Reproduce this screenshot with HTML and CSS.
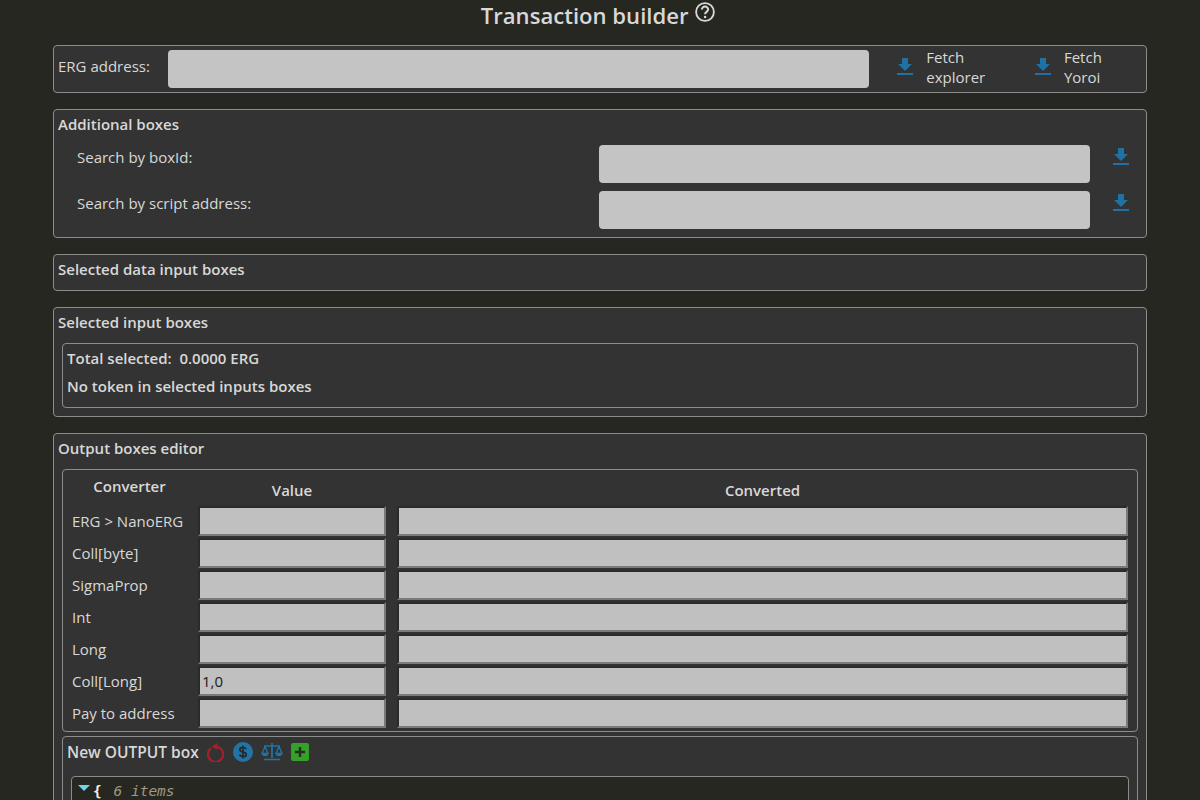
FILE: index.html
```html
<!DOCTYPE html>
<html lang="en">
<head>
  <meta charset="UTF-8">
  <title>Transaction builder</title>
  <link rel="stylesheet" href="styles.css">
</head>
<body>

  <h2 class="page-title">Transaction builder
    <svg class="help-icon" viewBox="0 0 24 24" width="22" height="22"><circle cx="12" cy="12" r="9.7" fill="none" stroke="currentColor" stroke-width="2"/><path d="M8.6 9.4a3.4 3.4 0 0 1 6.8 0c0 2.4-3.3 2.600-3.300 5" fill="none" stroke="currentColor" stroke-width="2.200"/><circle cx="12.100" cy="17.400" r="1.400" fill="currentColor"/></svg>
  </h2>

  <div class="card address-card">
    <label class="address-label">ERG address:</label>
    <input type="text" class="big-input address-input">
    <span class="fetch fetch-explorer">
      <svg class="dl-icon" viewBox="0 0 16 17" width="16" height="17"><use href="#dl"/></svg>
      <span class="fetch-text">Fetch explorer</span>
    </span>
    <span class="fetch">
      <svg class="dl-icon" viewBox="0 0 16 17" width="16" height="17"><use href="#dl"/></svg>
      <span class="fetch-text">Fetch Yoroi</span>
    </span>
  </div>

  <div class="card">
    <div class="card-title">Additional boxes</div>
    <div class="search-row">
      <label class="search-label">Search by boxId:</label>
      <input type="text" class="big-input search-input">
      <svg class="dl-icon" viewBox="0 0 16 17" width="16" height="17"><use href="#dl"/></svg>
    </div>
    <div class="search-row">
      <label class="search-label">Search by script address:</label>
      <input type="text" class="big-input search-input">
      <svg class="dl-icon" viewBox="0 0 16 17" width="16" height="17"><use href="#dl"/></svg>
    </div>
  </div>

  <div class="card">
    <div class="card-title">Selected data input boxes</div>
  </div>

  <div class="card">
    <div class="card-title">Selected input boxes</div>
    <div class="inner summary">
      <div class="summary-line">Total selected:&nbsp; 0.0000 ERG</div>
      <div class="summary-line">No token in selected inputs boxes</div>
    </div>
  </div>

  <div class="card output-card">
    <div class="card-title">Output boxes editor</div>
    <div class="inner converter">
      <div class="conv-head conv-first">Converter</div>
      <div class="conv-head">Value</div>
      <div class="conv-head">Converted</div>

      <label class="conv-label">ERG &gt; NanoERG</label>
      <input type="text" class="conv-input"><input type="text" class="conv-input">
      <label class="conv-label">Coll[byte]</label>
      <input type="text" class="conv-input"><input type="text" class="conv-input">
      <label class="conv-label">SigmaProp</label>
      <input type="text" class="conv-input"><input type="text" class="conv-input">
      <label class="conv-label">Int</label>
      <input type="text" class="conv-input"><input type="text" class="conv-input">
      <label class="conv-label">Long</label>
      <input type="text" class="conv-input"><input type="text" class="conv-input">
      <label class="conv-label">Coll[Long]</label>
      <input type="text" class="conv-input" value="1,0"><input type="text" class="conv-input">
      <label class="conv-label">Pay to address</label>
      <input type="text" class="conv-input"><input type="text" class="conv-input">
    </div>

    <div class="inner new-output">
      <div class="new-output-head">
        <span class="new-output-title">New OUTPUT box</span>
        <svg class="tool-icon reset-icon" viewBox="0 0 18 20" width="18" height="20"><path d="M5 6.200a7.600 7.600 0 1 0 6.500-1.300" fill="none" stroke="#a3212a" stroke-width="2.200"/><path d="M11.500 0.800v7.400L6 4.500z" fill="#a3212a"/></svg>
        <svg class="tool-icon" viewBox="0 0 20 20" width="20" height="20"><circle cx="10" cy="10" r="10" fill="#2274a8"/><path d="M13.200 7.200c-.4-1.200-1.600-1.900-3.200-1.900-1.900 0-3.200 1-3.200 2.400 0 3.200 6.500 1.500 6.500 4.700 0 1.400-1.400 2.300-3.300 2.300-1.700 0-3-.8-3.400-2.100M10 3.400v13.200" fill="none" stroke="#2a2a2a" stroke-width="1.800"/></svg>
        <svg class="tool-icon" viewBox="0 0 22 20" width="22" height="20"><path d="M11 1v15M3 4h16M3 17.500h16" fill="none" stroke="#2274a8" stroke-width="1.700"/><path d="M4 4.500 1 11.500h6zM18 4.500l-3 7h6z" fill="none" stroke="#2274a8" stroke-width="1.300"/><path d="M1 11.500a3 2.600 0 0 0 6 0zM15 11.500a3 2.600 0 0 0 6 0z" fill="#2274a8"/></svg>
        <svg class="tool-icon" viewBox="0 0 18 18" width="18" height="18"><rect width="18" height="18" rx="2" fill="#36a02a"/><path d="M9 4v10M4 9h10" stroke="#26301f" stroke-width="2.400"/></svg>
      </div>
      <div class="json-view">
        <span class="json-caret"></span><span class="json-brace">{</span>
        <span class="json-count">6 items</span>
      </div>
    </div>
  </div>

  <svg class="sprite" width="0" height="0">
    <symbol id="dl" viewBox="0 0 16 17">
      <path d="M5 0h6v6h4l-7 7-7-7h4z" fill="#2271a5"/>
      <rect y="15" width="16" height="2" fill="#2271a5"/>
    </symbol>
  </svg>

</body>
</html>
```

FILE: styles.css
```css
html {
  overflow: hidden;
}

body {
  margin: 0;
  padding: 0 53px;
  height: 800px;
  overflow: hidden;
  background: #272722;
  color: #d8d8d8;
  font-family: 'Open Sans', 'Noto Sans', sans-serif;
  font-size: 15px;
}

.page-title {
  margin: 0;
  height: 45px;
  padding-right: 3px;
  box-sizing: border-box;
  text-align: center;
  font-size: 22.1px;
  line-height: 30px;
  font-weight: 600;
  color: #d8d8d8;
}

.help-icon {
  vertical-align: 1px;
}

.card {
  background: #333333;
  border: 1px solid #8c8c8c;
  border-radius: 4px;
  padding: 4px;
  margin-bottom: 16px;
}

.card-title {
  font-weight: 600;
  height: 21px;
  line-height: 21px;
  margin-bottom: 10px;
}

.card-title:last-child {
  margin-bottom: 6px;
}

.big-input {
  height: 38px;
  box-sizing: border-box;
  background: #c4c4c4;
  border: none;
  border-radius: 4px;
}

.address-card {
  display: flex;
  align-items: flex-start;
  height: 48px;
  box-sizing: border-box;
}

.address-label {
  width: 110px;
  line-height: 33px;
}

.address-input {
  width: 702px;
}

.fetch {
  display: flex;
  align-items: center;
  height: 33px;
}

.fetch-explorer {
  margin-left: 28px;
  margin-right: 8px;
}

.fetch-text {
  margin-left: 13px;
}

.dl-icon {
  flex: none;
}

.search-row {
  display: flex;
  align-items: flex-start;
  height: 46px;
  padding-left: 19px;
}

.search-row:last-child {
  height: 42px;
}

.search-label {
  width: 522px;
  line-height: 25px;
}

.search-input {
  width: 491px;
}

.search-row .dl-icon {
  margin-left: 23px;
  margin-top: 3px;
}

.inner {
  border: 1px solid #8c8c8c;
  border-radius: 4px;
  margin: 0 4px;
}

.summary {
  padding: 4px;
  height: 65px;
  margin-bottom: 4px;
  box-sizing: border-box;
}

.summary-line {
  font-weight: 600;
  height: 28px;
  line-height: 21px;
}

.converter {
  display: grid;
  grid-template-columns: 115px 188px 731px;
  grid-template-rows: 35px repeat(7, 32px);
  column-gap: 11px;
  padding-left: 9px;
  height: 263px;
  box-sizing: border-box;
  align-items: center;
}

.conv-head {
  font-weight: 600;
  text-align: center;
  align-self: end;
  line-height: 20px;
  height: 20px;
  padding-bottom: 5px;
}

.conv-first {
  padding-bottom: 9px;
}

.conv-label {
  line-height: 32px;
}

.conv-input {
  width: 100%;
  height: 30px;
  box-sizing: border-box;
  background: #c0c0c0;
  border: 2px solid;
  border-color: #2a2a2a #7a7a7a #7a7a7a #2a2a2a;
  padding: 1px 2px;
  color: #1a1a1a;
  font-family: inherit;
  font-size: 15px;
}

.new-output {
  margin-top: 4px;
  height: 200px;
  padding: 4px 8px 0 4px;
}

.new-output-head {
  display: flex;
  align-items: center;
  height: 22px;
}

.new-output-title {
  font-weight: 600;
  font-size: 15.5px;
  margin-right: 7px;
}

.tool-icon {
  margin-right: 8px;
}

.reset-icon {
  margin-right: 9px;
}

.json-view {
  margin: 13px 0 0 4px;
  background: #272722;
  border: 1px solid #8c8c8c;
  border-radius: 4px;
  height: 160px;
  padding: 3px 0 0 6px;
  line-height: 22px;
  font-family: 'DejaVu Sans Mono', monospace;
  font-size: 14.5px;
}

.json-caret {
  display: inline-block;
  width: 0;
  height: 0;
  border-left: 6px solid transparent;
  border-right: 6px solid transparent;
  border-top: 6px solid #6fd4ee;
  vertical-align: 5px;
  margin-right: 3px;
}

.json-brace {
  font-weight: 700;
  color: #eeeeee;
}

.json-count {
  font-style: italic;
  color: #a0977f;
  margin-left: 3px;
}

.sprite {
  position: absolute;
}
```
